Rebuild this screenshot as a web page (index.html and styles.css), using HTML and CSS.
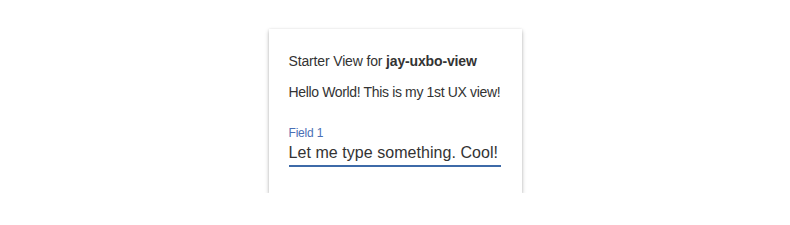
FILE: index.html
```html
<!DOCTYPE html>
<html>
<head>
<meta charset="utf-8">
<link rel="stylesheet" href="styles.css">
</head>
<body>
<div class="page">
  <div class="card">
    <div class="title">Starter View for <b>jay-uxbo-view</b></div>
    <div class="hello">Hello World! This is my 1st UX view!</div>
    <div class="field">
      <label class="label">Field 1</label>
      <div class="input">Let me type something. Cool!</div>
    </div>
  </div>
</div>
</body>
</html>
```
FILE: styles.css
```css
html, body { margin: 0; padding: 0; background: #fff; }
body { font-family: "Liberation Sans", Arial, sans-serif; color: #333; }
.page { display: flex; justify-content: center; padding-top: 29px; }
.card {
  width: 253px;
  height: 164px;
  box-sizing: border-box;
  padding: 22px 21px 0 20px;
  background: #fff;
  white-space: nowrap;
  box-shadow: 0 2px 4px rgba(0,0,0,0.28), 0 0 2px rgba(0,0,0,0.08);
}
.title { font-size: 14px; line-height: 20px; margin-top: 0; letter-spacing: -0.15px; }
.title b { font-weight: 700; }
.hello { font-size: 14px; line-height: 20px; margin-top: 11px; letter-spacing: -0.35px; }
.field { margin-top: 23px; display: flex; flex-direction: column; }
.label { font-size: 12px; line-height: 16px; color: #4a6fb5; letter-spacing: -0.2px; }
.input { font-size: 16px; line-height: 22px; color: #333; border-bottom: 2px solid #3d6aa8; padding-bottom: 1px; margin-top: 1px; letter-spacing: 0.05px; }
```
